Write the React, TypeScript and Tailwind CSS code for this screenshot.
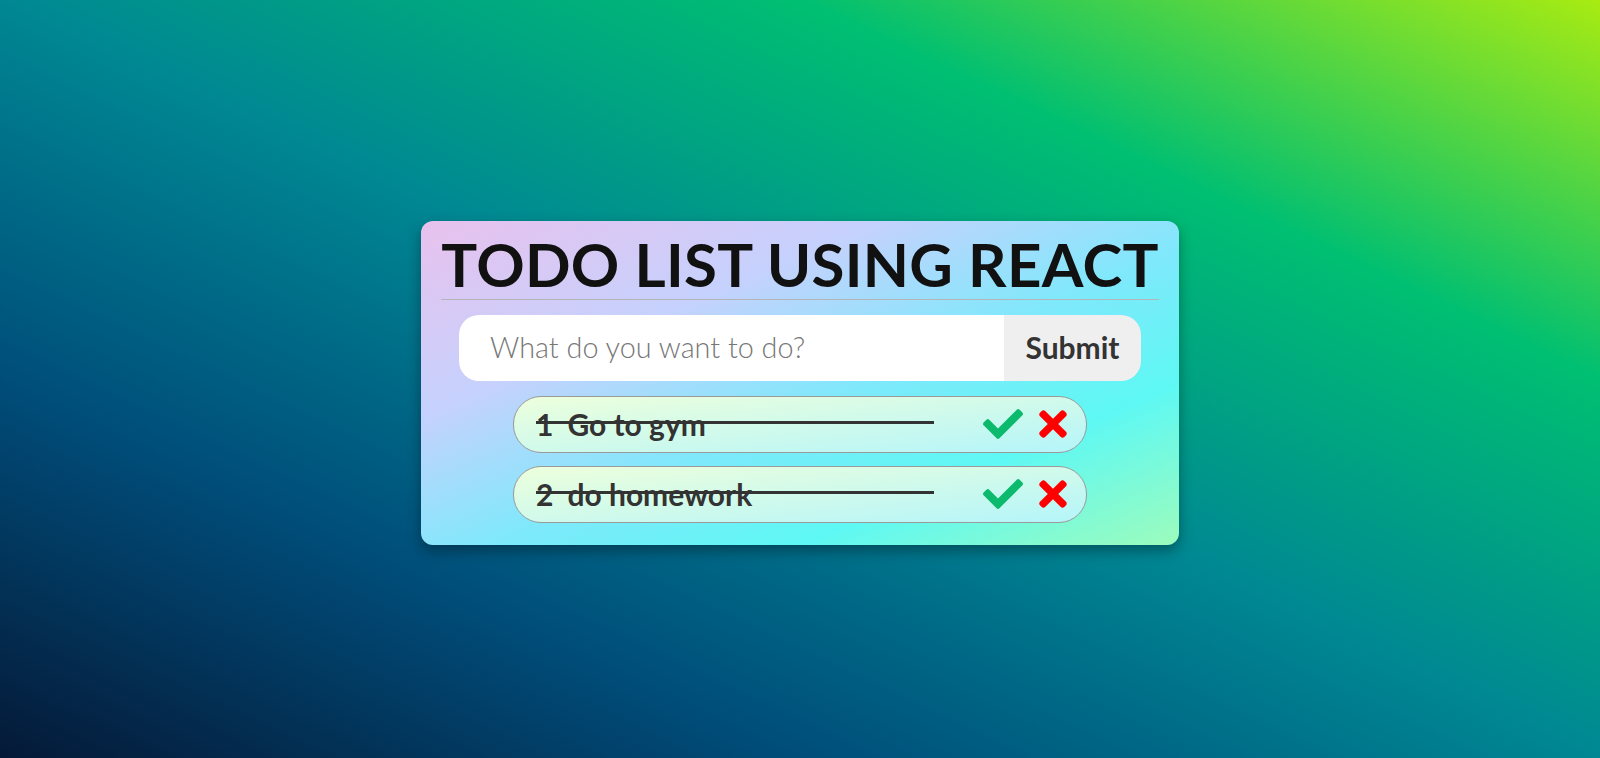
import { FaCheck, FaTimes } from 'react-icons/fa'

const todos = [
  { id: 1, text: 'Go to gym' },
  { id: 2, text: 'do homework' },
]

function TodoItem({ id, text }: { id: number; text: string }) {
  return (
    <li className="flex items-center justify-between w-[574px] h-[57px] pl-[22px] pr-[13px] rounded-[28px] border border-[#9a9a9a] bg-[linear-gradient(to_bottom_right,#edffdc,#b4f5fa)]">
      <div className="relative w-[398px] text-[30px] font-bold text-[#333] leading-none whitespace-nowrap">
        <span>{id}</span>
        <span className="ml-[14px]">{text}</span>
        <div className="absolute left-0 right-0 top-[12px] h-[3px] bg-[#333]" />
      </div>
      <div className="flex items-center gap-[10px]">
        <FaCheck size={40} className="text-[#0cba6e]" />
        <FaTimes size={40} className="text-[#ff0000]" />
      </div>
    </li>
  )
}

export default function App() {
  return (
    <div className="min-h-screen flex items-center justify-center pt-[7px] font-['Lato',sans-serif] bg-[linear-gradient(to_right_top,#051937,#004d7a,#008793,#00bf72,#a8eb12)]">
      <div className="w-[758px] px-5 pt-[9px] pb-[22px] rounded-xl shadow-[0_6px_14px_rgba(0,0,0,0.35)] bg-[linear-gradient(to_bottom_right,#e9c1ed,#c6d1fd_30%,#7ee9fb_55%,#5ef8f4_75%,#9cfcbc)]">
        <h1 className="text-[60px] leading-[69px] font-bold tracking-[0.3px] whitespace-nowrap text-[#111] text-center border-b border-[#b5b5b5]">
          TODO LIST USING REACT
        </h1>

        <form className="mt-[15px] mx-auto flex w-[682px] h-[66px] rounded-[20px] overflow-hidden">
          <input
            type="text"
            placeholder="What do you want to do?"
            className="flex-1 min-w-0 bg-white pl-[31px] text-[28.8px] font-light text-[#333] placeholder:text-[#777] outline-none"
          />
          <button
            type="button"
            className="w-[137px] bg-[#efefef] text-[30px] font-bold text-[#333]"
          >
            Submit
          </button>
        </form>

        <ul className="mt-[15px] flex flex-col items-center gap-[13px]">
          {todos.map((t) => (
            <TodoItem key={t.id} {...t} />
          ))}
        </ul>
      </div>
    </div>
  )
}
